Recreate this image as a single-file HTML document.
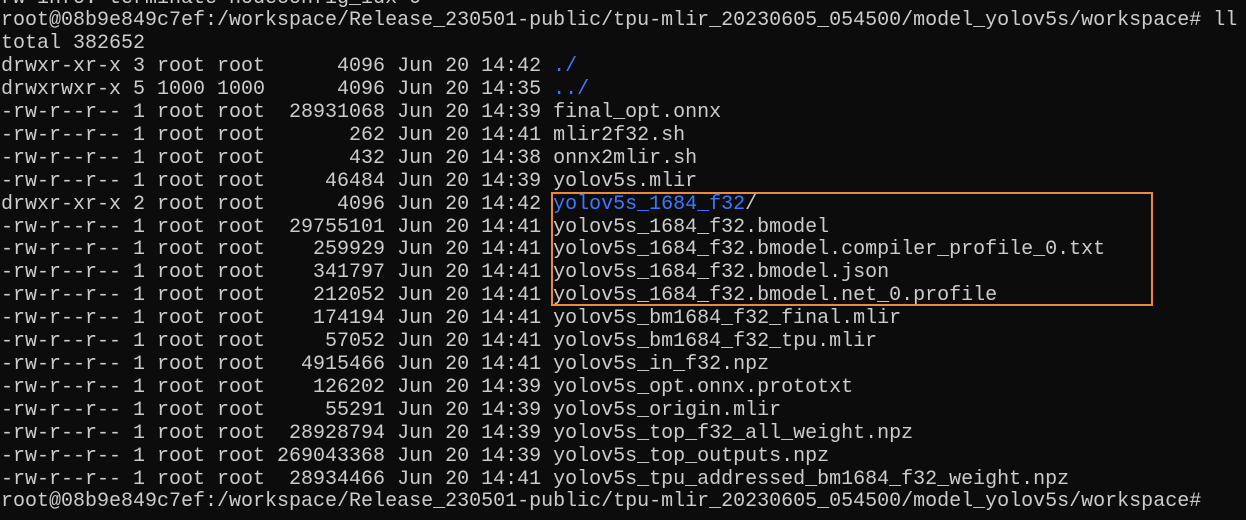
<!DOCTYPE html>
<html><head><meta charset="utf-8"><style>
html,body{margin:0;padding:0;background:#0c0c0c;width:1246px;height:520px;overflow:hidden}
pre{position:absolute;left:1px;top:-12.5px;margin:0;font-family:"Liberation Mono",monospace;font-size:20px;line-height:22.9px;color:#cccccc;letter-spacing:0}
.b{color:#3b78ff}
.box{position:absolute;left:551px;top:192px;width:598px;height:110px;border:2.5px solid #f0883a}
</style></head><body>
<pre>rw info: terminate nodeconfig_idx 0
root@08b9e849c7ef:/workspace/Release_230501-public/tpu-mlir_20230605_054500/model_yolov5s/workspace# ll
total 382652
drwxr-xr-x 3 root root      4096 Jun 20 14:42 <span class="b">./</span>
drwxrwxr-x 5 1000 1000      4096 Jun 20 14:35 <span class="b">../</span>
-rw-r--r-- 1 root root  28931068 Jun 20 14:39 final_opt.onnx
-rw-r--r-- 1 root root       262 Jun 20 14:41 mlir2f32.sh
-rw-r--r-- 1 root root       432 Jun 20 14:38 onnx2mlir.sh
-rw-r--r-- 1 root root     46484 Jun 20 14:39 yolov5s.mlir
drwxr-xr-x 2 root root      4096 Jun 20 14:42 <span class="b">yolov5s_1684_f32</span>/
-rw-r--r-- 1 root root  29755101 Jun 20 14:41 yolov5s_1684_f32.bmodel
-rw-r--r-- 1 root root    259929 Jun 20 14:41 yolov5s_1684_f32.bmodel.compiler_profile_0.txt
-rw-r--r-- 1 root root    341797 Jun 20 14:41 yolov5s_1684_f32.bmodel.json
-rw-r--r-- 1 root root    212052 Jun 20 14:41 yolov5s_1684_f32.bmodel.net_0.profile
-rw-r--r-- 1 root root    174194 Jun 20 14:41 yolov5s_bm1684_f32_final.mlir
-rw-r--r-- 1 root root     57052 Jun 20 14:41 yolov5s_bm1684_f32_tpu.mlir
-rw-r--r-- 1 root root   4915466 Jun 20 14:41 yolov5s_in_f32.npz
-rw-r--r-- 1 root root    126202 Jun 20 14:39 yolov5s_opt.onnx.prototxt
-rw-r--r-- 1 root root     55291 Jun 20 14:39 yolov5s_origin.mlir
-rw-r--r-- 1 root root  28928794 Jun 20 14:39 yolov5s_top_f32_all_weight.npz
-rw-r--r-- 1 root root 269043368 Jun 20 14:39 yolov5s_top_outputs.npz
-rw-r--r-- 1 root root  28934466 Jun 20 14:41 yolov5s_tpu_addressed_bm1684_f32_weight.npz
root@08b9e849c7ef:/workspace/Release_230501-public/tpu-mlir_20230605_054500/model_yolov5s/workspace#</pre>
<div class="box"></div>
</body></html>
